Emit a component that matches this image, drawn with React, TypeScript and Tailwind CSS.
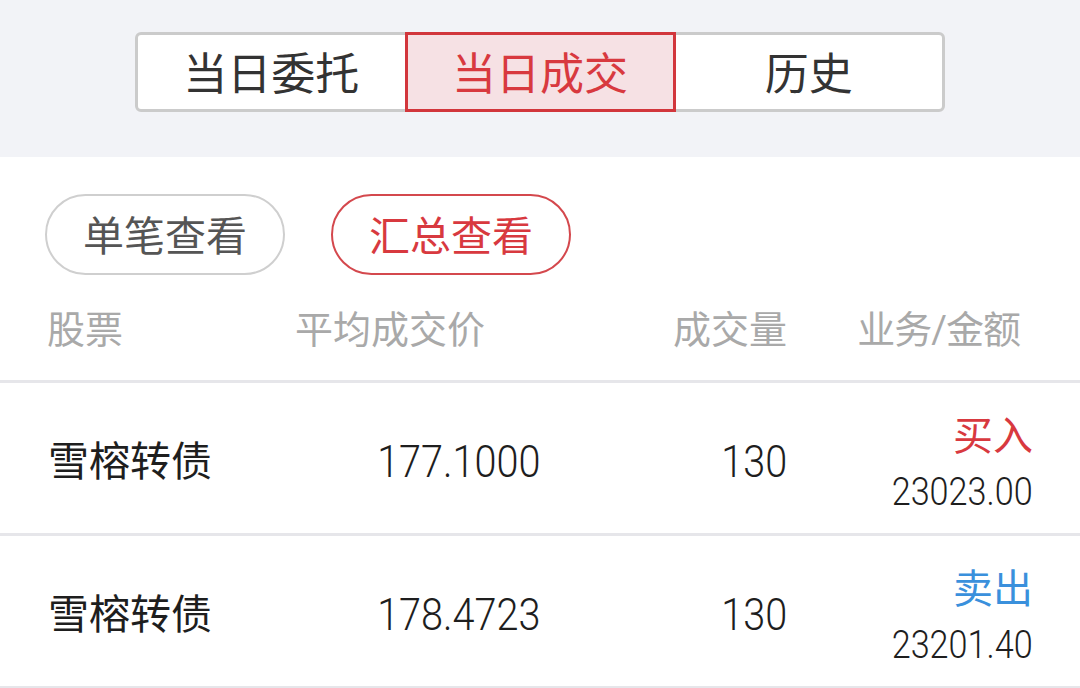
import React from "react";

const FONT = { fontFamily: '"Roboto", "Noto Sans CJK SC", sans-serif' };

function Num({ children, className = "" }: { children: React.ReactNode; className?: string }) {
  return (
    <span className={"inline-block origin-right scale-x-[0.9] font-['Roboto'] font-light " + className}>{children}</span>
  );
}

const rows = [
  { name: "雪榕转债", price: "177.1000", vol: "130", side: "买入", sideColor: "text-[#d8393f]", amt: "23023.00" },
  { name: "雪榕转债", price: "178.4723", vol: "130", side: "卖出", sideColor: "text-[#3a90dc]", amt: "23201.40" },
];

export default function App() {
  return (
    <div className="w-[1080px] h-[688px] overflow-hidden bg-white" style={FONT}>
      {/* top segment */}
      <div className="h-[157px] bg-[#f2f3f7] pt-[32px] flex justify-center">
        <div className="w-[810px] h-[80px] flex rounded-[6px] border-[3px] border-[#cbcbcb] bg-white">
          <div className="flex-1 flex items-center justify-center pt-[5px] text-[44px] text-[#333333] leading-none">当日委托</div>
          <div className="w-[271px] -my-[3px] flex items-center justify-center pt-[5px] text-[44px] text-[#d8393f] leading-none border-[3px] border-[#d2363c] bg-[#f6e1e4]">当日成交</div>
          <div className="flex-1 flex items-center justify-center pt-[5px] text-[44px] text-[#333333] leading-none">历史</div>
        </div>
      </div>

      {/* pills */}
      <div className="pt-[37px] pl-[45px] flex gap-[46px]">
        <div className="w-[240px] h-[81px] rounded-full border-2 border-[#cfcfcf] flex items-center justify-center pt-[5px] text-[41px] text-[#555555] leading-none">单笔查看</div>
        <div className="w-[240px] h-[81px] rounded-full border-2 border-[#d4484d] flex items-center justify-center pt-[5px] text-[41px] text-[#d8393f] leading-none">汇总查看</div>
      </div>

      {/* header */}
      <div className="h-[108px] px-[47px] pt-[4px] grid grid-cols-[248px_245px_247px_246px] items-center text-[38px] text-[#a9a9a9] leading-none border-b-[3px] border-[#e6e6ea]">
        <div>股票</div>
        <div>平均成交价</div>
        <div className="text-right">成交量</div>
        <div className="text-right pr-[13px] tracking-[-1px]">业务/金额</div>
      </div>

      {rows.map((r, i) => (
        <div
          key={i}
          className="h-[153px] px-[47px] pt-[8px] grid grid-cols-[248px_245px_247px_246px] items-center border-b-[3px] border-[#e6e6ea] text-[#1e1e1e]"
        >
          <div className="text-[41px] leading-none pl-[1px]">{r.name}</div>
          <div className="text-right text-[44px] leading-none"><Num>{r.price}</Num></div>
          <div className="text-right text-[44px] leading-none"><Num>{r.vol}</Num></div>
          <div className="flex flex-col items-end gap-[16px] pt-[4px]">
            <div className={"text-[40px] leading-none " + r.sideColor}>{r.side}</div>
            <div className="text-[38px] leading-none"><Num>{r.amt}</Num></div>
          </div>
        </div>
      ))}
    </div>
  );
}
